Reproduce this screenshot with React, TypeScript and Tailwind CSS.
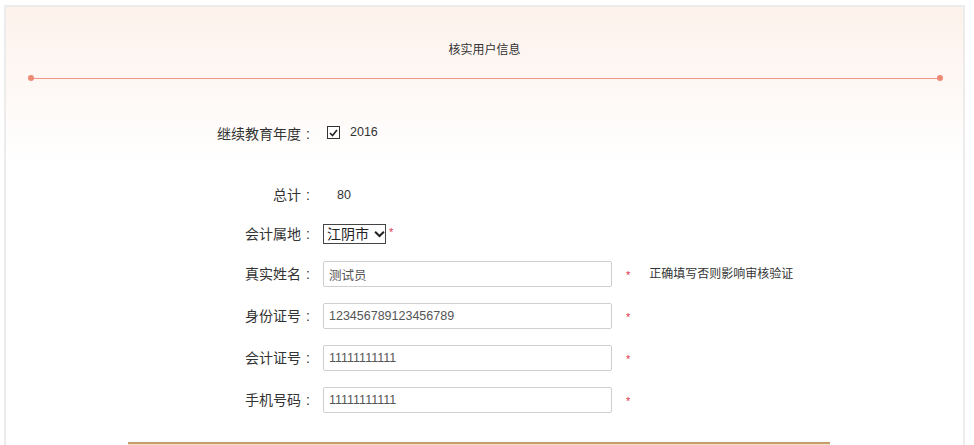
import { useState } from "react";

const font = { fontFamily: '"Liberation Sans", "Noto Sans CJK SC", sans-serif' };

function Req() {
  return <span className="text-[11px] leading-none text-[#e0334a]">*</span>;
}

function Label({ children }: { children: string }) {
  return (
    <span className="flex w-[309px] shrink-0 justify-end text-[14px] text-[#333]">
      {children}
      <span className="w-[14px] text-center">:</span>
    </span>
  );
}

function TextRow({ label, value, hint }: { label: string; value: string; hint?: string }) {
  const [v, setV] = useState(value);
  return (
    <div className="flex h-[42px] items-center">
      <Label>{label}</Label>
      <input
        value={v}
        onChange={(e) => setV(e.target.value)}
        className="ml-[8px] h-[26px] w-[289px] rounded-[2px] border border-[#cfcfcf] bg-white px-[5px] text-[12.5px] text-[#555] outline-none"
        style={font}
      />
      <span className="ml-[14px]">
        <Req />
      </span>
      {hint && <span className="ml-[19px] text-[12px] text-[#333]">{hint}</span>}
    </div>
  );
}

export default function App() {
  return (
    <div className="min-h-[445px] bg-white pt-[5px] pl-[4px]" style={font}>
      <div className="w-[961px] border-2 border-[#ececec] border-b-0">
        <div className="bg-linear-to-b from-[#fdf2ec] via-[#fef8f5] to-white pt-[35px] pb-[9px]">
          <div className="text-center text-[12px] leading-[16px] text-[#333]">核实用户信息</div>
          <div className="mt-[17px] ml-[22px] mr-[20px] flex items-center">
            <span className="h-[6px] w-[6px] rounded-full bg-[#ee8a74]" />
            <span className="h-px flex-1 bg-[#ef9582]" />
            <span className="h-[6px] w-[6px] rounded-full bg-[#ee8a74]" />
          </div>
          <div className="mt-[33px] flex h-[40px] items-center">
            <Label>继续教育年度</Label>
            <span className="ml-[12px] mb-[3px] flex h-[13px] w-[13px] items-center justify-center border border-[#333] bg-white">
              <svg width="9" height="8" viewBox="0 0 9 8">
                <path d="M1 4 L3.5 6.5 L8 1" fill="none" stroke="#222" strokeWidth="1.6" />
              </svg>
            </span>
            <span className="ml-[10px] mb-[3px] text-[12.5px] text-[#333]">2016</span>
          </div>
        </div>

        <div className="mt-[12px] flex h-[40px] items-center">
          <Label>总计</Label>
          <span className="ml-[22px] text-[12.5px] text-[#333]">80</span>
        </div>

        <div className="flex h-[38px] items-center">
          <Label>会计属地</Label>
          <span className="ml-[8px] inline-flex h-[20px] w-[63px] items-center border border-[#444] bg-white pl-[3px]">
            <select
              defaultValue="江阴市"
              className="appearance-none bg-transparent text-[14px] leading-none text-[#222] outline-none"
              style={font}
            >
              <option>江阴市</option>
            </select>
            <svg className="ml-[5px]" width="12" height="8" viewBox="0 0 12 8">
              <path d="M1.2 1.5 L6 6.2 L10.8 1.5" fill="none" stroke="#222" strokeWidth="2.2" />
            </svg>
          </span>
          <span className="ml-[3px] mb-[6px]">
            <Req />
          </span>
        </div>

        <TextRow label="真实姓名" value="测试员" hint="正确填写否则影响审核验证" />
        <TextRow label="身份证号" value="123456789123456789" />
        <TextRow label="会计证号" value="11111111111" />
        <TextRow label="手机号码" value="11111111111" />

        <div className="mt-[21px] ml-[122px] h-[10px] w-[702px] border-t-2 border-[#c79d6b] bg-[#f2e2c6]" />
      </div>
    </div>
  );
}
